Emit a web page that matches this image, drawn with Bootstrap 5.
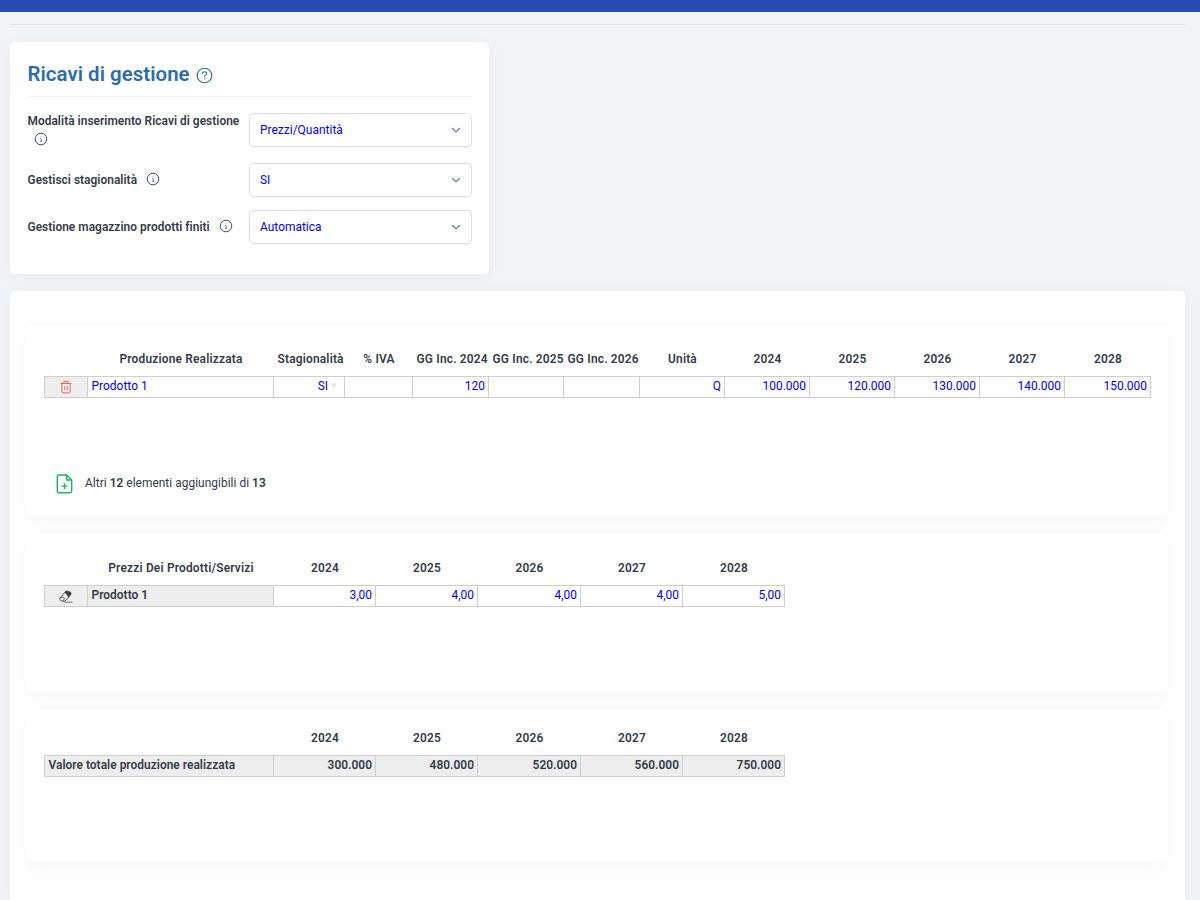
<!DOCTYPE html>
<html lang="it">
<head>
    <meta charset="UTF-8">
    <meta name="viewport" content="width=device-width, initial-scale=1.0">
    <title>Ricavi di gestione</title>
    <link rel="stylesheet" href="https://cdn.jsdelivr.net/npm/bootstrap@5.3.0/dist/css/bootstrap.min.css">
    <style>
        body {
            background: #f0f4f7;
            color: #323c4c;
            font-family: Roboto, "Liberation Sans", sans-serif;
            font-size: 11.9px;
            line-height: 17px;
            letter-spacing: .04px;
            height: 900px;
            overflow: hidden;
        }
        b, .form-label { font-weight: 600; }
        .topbar { height: 12px; background: #284bb1; }
        .page { padding: 12px 15px 0 10px; }
        .divider { height: 1px; background: #e2e8ec; }
        .panel {
            background: #fff;
            border-radius: 5px;
            box-shadow: 0 3px 17px rgba(0, 0, 0, .04);
        }
        .settings { width: 478.5px; height: 232px; margin-top: 17px; padding: 17px 17px 0 17.5px; }
        .heading { height: 38px; border-bottom: 1px solid #edf2f7; color: #2b6cb0; }
        .heading h1 { font-size: 20.4px; line-height: 30px; font-weight: 600; letter-spacing: .05px; }
        .heading svg { margin: 8px 0 0 6.5px; }
        .setting { display: grid; grid-template-columns: 221.5px 222.5px; }
        .setting-first { margin-top: 16px; }
        .setting-first .form-label { line-height: 19px; margin-top: -1.5px; }
        .setting + .setting { margin-top: 13px; }
        .setting-first + .setting { margin-top: 13.5px; }
        .form-label svg { margin: -2px 0 0 6px; color: #4a5568; }
        .form-select {
            height: 34px;
            padding: 1px 24px 0 10px;
            border-color: #d8dfe7;
            border-radius: 5px;
            box-shadow: 0 1px 2px rgba(0, 0, 0, .05);
            color: #00f;
            font-size: 11.9px;
            letter-spacing: .04px;
            background-image: url("data:image/svg+xml,%3csvg xmlns='http://www.w3.org/2000/svg' viewBox='0 0 16 16'%3e%3cpath fill='none' stroke='%23718096' stroke-width='2.2' stroke-linecap='round' stroke-linejoin='round' d='m2.5 5.500 5.500 5.500 5.500-5.500'/%3e%3c/svg%3e");
            background-size: 10px 10px;
            background-position: right 10px center;
        }
        .sheets { margin-top: 17px; padding: 34px 17px 0; height: 609px; border-radius: 5px 5px 0 0; }
        .sheet { padding: 17px; margin-bottom: 17px; }
        .sheet-qty { height: 192px; }
        .sheet-price { height: 159px; }
        .sheet-total { height: 152px; margin-bottom: 18px; }
        .sheet-next { height: 20px; padding: 0; margin: 0; border-radius: 5px 5px 0 0; }

        .grid-table { table-layout: fixed; border-collapse: collapse; }
        .grid-table th {
            height: 34px;
            padding: 1px 3px 0 4px;
            font-weight: 600;
            letter-spacing: .2px;
            text-align: center;
            white-space: nowrap;
        }
        .sheet-total .grid-table th { height: 28px; padding: 0 3px 5px 4px; }
        .grid-table td {
            height: 21px;
            padding: 0 3px 2px 4px;
            border: 1px solid #cfcfcf;
            color: #00f;
            text-align: right;
            line-height: 18px;
            white-space: nowrap;
        }
        .grid-table td.name { text-align: left; padding-left: 3.5px; }
        .grid-table td.tool { padding: 0 1px 0 0; text-align: center; background: #eee; }
        .grid-table td.fixed { background: #eee; color: #323c4c; font-weight: 600; }
        .grid-table td.season { padding-right: 7px; }
        .grid-table .tool svg { display: block; margin: 0 auto -1px; }
        .c-tool { width: 43px; } .c-name { width: 186px; } .c-season { width: 71px; } .c-vat { width: 68px; }
        .c-days { width: 76px; } .c-days-short { width: 75px; } .c-unit { width: 85px; } .c-unit-wide { width: 86px; }
        .c-label { width: 229px; } .c-price { width: 102px; } .c-price-wide { width: 103px; }
        .adder { margin: 76px 0 0 12px; }
        .adder svg { margin-right: 12px; }
    </style>
</head>
<body>
    <svg class="d-none">
        <symbol id="info" viewBox="0 0 14 14">
            <circle cx="7" cy="7" r="5.800" fill="none" stroke="currentColor"/>
            <path d="M6.200 6.500H7.100V9.300M6.100 9.400H8.100M7 4.300V5.100" fill="none" stroke="currentColor" stroke-width=".7"/>
        </symbol>
    </svg>

    <div class="topbar"></div>
    <div class="page">
        <div class="divider"></div>

        <!-- Settings -->
        <div class="panel settings">
            <div class="heading d-flex align-items-start">
                <h1 class="mb-0">Ricavi di gestione</h1>
                <svg width="17" height="17" viewBox="0 0 17 17" fill="none" stroke="currentColor" stroke-linecap="round">
                    <circle cx="8.500" cy="8.500" r="7.300" stroke-width="1.100"/>
                    <path d="M6.400 6.800C6.400 4 10.700 4.100 10.700 6.700C10.700 8.300 8.500 8.400 8.500 9.900M8.500 11.900V12" stroke-width="1.100"/>
                </svg>
            </div>
            <div class="setting setting-first">
                <label class="form-label mb-0">Modalità inserimento Ricavi di gestione<br><svg width="14" height="14"><use href="#info"/></svg></label>
                <select class="form-select"><option>Prezzi/Quantità</option></select>
            </div>
            <div class="setting align-items-center">
                <label class="form-label mb-0">Gestisci stagionalità <svg width="14" height="14"><use href="#info"/></svg></label>
                <select class="form-select"><option>SI</option></select>
            </div>
            <div class="setting align-items-center">
                <label class="form-label mb-0">Gestione magazzino prodotti finiti <svg width="14" height="14"><use href="#info"/></svg></label>
                <select class="form-select"><option>Automatica</option></select>
            </div>
        </div>

        <div class="panel sheets">
            <!-- Quantities -->
            <div class="panel sheet sheet-qty">
                <table class="grid-table" style="width: 1106px">
                    <colgroup>
                        <col class="c-tool"><col class="c-name"><col class="c-season"><col class="c-vat">
                        <col class="c-days"><col class="c-days-short"><col class="c-days">
                        <col class="c-unit"><col class="c-unit"><col class="c-unit"><col class="c-unit"><col class="c-unit"><col class="c-unit-wide">
                    </colgroup>
                    <tr>
                        <th></th><th>Produzione Realizzata</th><th>Stagionalità</th><th>% IVA</th>
                        <th>GG Inc. 2024</th><th>GG Inc. 2025</th><th>GG Inc. 2026</th><th>Unità</th>
                        <th>2024</th><th>2025</th><th>2026</th><th>2027</th><th>2028</th>
                    </tr>
                    <tr>
                        <td class="tool">
                            <svg width="12" height="14" viewBox="0 0 12 14" fill="none" stroke="#e9605b">
                                <path d="M.6 3.500H11.400M3.900 3.300V1.300H8.100V3.300M1.900 3.700V11.500Q1.900 12.900 3.200 12.900H8.800Q10.100 12.900 10.100 11.500V3.700"/>
                                <path d="M4.800 6.200V10.300M7.200 6.200V10.300" stroke-width=".9"/>
                            </svg>
                        </td>
                        <td class="name">Prodotto 1</td>
                        <td class="season">SI <svg width="6" height="6" viewBox="0 0 6 6"><path d="M0 .5H6L3 5.500Z" fill="#e4e4e4"/></svg></td>
                        <td></td><td>120</td><td></td><td></td><td>Q</td>
                        <td>100.000</td><td>120.000</td><td>130.000</td><td>140.000</td><td>150.000</td>
                    </tr>
                </table>
                <div class="adder d-flex align-items-center">
                    <svg width="17" height="20" viewBox="0 0 17 20" fill="none" stroke="#18b663" stroke-width="1.400" stroke-linejoin="round">
                        <path d="M3 1H10.700L15.700 6V17Q15.700 18.700 14 18.700H3Q1.300 18.700 1.300 17V2.700Q1.300 1 3 1Z"/>
                        <path d="M10.700 1V6H15.700M8.500 9.200V15M5.600 12.100H11.400"/>
                    </svg>
                    <span>Altri <b>12</b> elementi aggiungibili di <b>13</b></span>
                </div>
            </div>

            <!-- Prices -->
            <div class="panel sheet sheet-price">
                <table class="grid-table" style="width: 740px">
                    <colgroup>
                        <col class="c-tool"><col class="c-name">
                        <col class="c-price"><col class="c-price"><col class="c-price-wide"><col class="c-price"><col class="c-price">
                    </colgroup>
                    <tr>
                        <th></th><th>Prezzi Dei Prodotti/Servizi</th>
                        <th>2024</th><th>2025</th><th>2026</th><th>2027</th><th>2028</th>
                    </tr>
                    <tr>
                        <td class="tool">
                            <svg width="14" height="13" viewBox="0 0 14 13" fill="none" stroke="#3a3a3a" stroke-linejoin="round">
                                <path d="M.9 8.300L6.500 1.500Q7.300 .7 8.300 1L11.300 2.200Q12.600 2.900 11.900 4.200L6.200 11Q5.300 12 4.200 11.400L1.600 10.300Q.2 9.600 .9 8.300Z" stroke-width=".8"/>
                                <path d="M5.600 2.600L7.300 1L11.900 2.600L12.200 4.200L9.300 7.700L8.300 5.200Z" fill="#3a3a3a" stroke="none"/>
                                <path d="M1.400 7.900Q4.300 6 5.200 7.800Q5.600 9 3.900 11.200M5.500 12.200H13.500" stroke-width=".7"/>
                            </svg>
                        </td>
                        <td class="name fixed">Prodotto 1</td>
                        <td>3,00</td><td>4,00</td><td>4,00</td><td>4,00</td><td>5,00</td>
                    </tr>
                </table>
            </div>

            <!-- Totals -->
            <div class="panel sheet sheet-total">
                <table class="grid-table" style="width: 740px">
                    <colgroup>
                        <col class="c-label">
                        <col class="c-price"><col class="c-price"><col class="c-price-wide"><col class="c-price"><col class="c-price">
                    </colgroup>
                    <tr><th></th><th>2024</th><th>2025</th><th>2026</th><th>2027</th><th>2028</th></tr>
                    <tr>
                        <td class="name fixed">Valore totale produzione realizzata</td>
                        <td class="fixed">300.000</td><td class="fixed">480.000</td><td class="fixed">520.000</td>
                        <td class="fixed">560.000</td><td class="fixed">750.000</td>
                    </tr>
                </table>
            </div>

            <div class="panel sheet sheet-next"></div>
        </div>
    </div>

    <script src="https://cdn.jsdelivr.net/npm/bootstrap@5.3.0/dist/js/bootstrap.bundle.min.js"></script>
</body>
</html>
